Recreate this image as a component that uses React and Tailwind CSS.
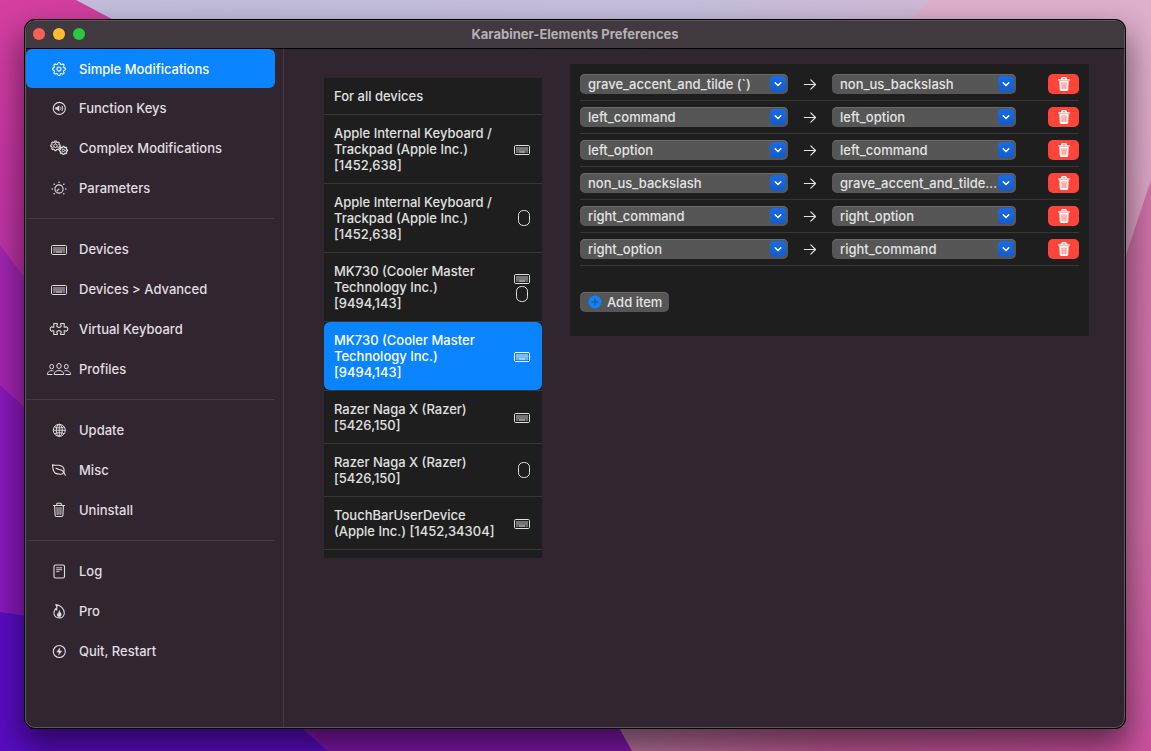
import React from "react";

const KeyboardIcon = () => (
  <svg width="16" height="12" viewBox="0 0 16 12" fill="none" aria-hidden="true">
    <rect x="0.5" y="2.5" width="15" height="9" rx="1.2" stroke="currentColor" />
    <path d="M2 4h12v4H2Z" fill="currentColor" fillOpacity="0.45" />
    <path d="M2 8h2v2H2ZM12 8h2v2h-2Z" fill="currentColor" fillOpacity="0.4" />
    <path d="M4.500 8h7v2h-7Z" fill="currentColor" fillOpacity="0.6" />
  </svg>
);

const MouseIcon = () => (
  <svg width="12" height="16" viewBox="0 0 12 16" fill="none" aria-hidden="true">
    <rect x="0.5" y="0.5" width="11" height="15" rx="4.8" stroke="currentColor" />
  </svg>
);

const gearPath = (cx, cy, r, depth, teeth) => {
  const n = teeth * 12;
  const pts = [];
  for (let i = 0; i < n; i++) {
    const a = (i / n) * Math.PI * 2 - Math.PI / 2;
    const wave = Math.max(-1, Math.min(1, Math.cos(a * teeth) * 1.8));
    const rr = r + depth * wave;
    pts.push(`${(cx + rr * Math.cos(a)).toFixed(2)} ${(cy + rr * Math.sin(a)).toFixed(2)}`);
  }
  return `M${pts.join("L")}Z`;
};

const GearIcon = () => (
  <svg width="16" height="16" viewBox="0 0 16 16" fill="none" stroke="currentColor" aria-hidden="true">
    <path d={gearPath(8, 8, 5.8, 0.7, 8)} strokeWidth="1.1" strokeLinejoin="round" />
    <circle cx="8" cy="8" r="2" strokeWidth="1.1" />
  </svg>
);

const SpeakerIcon = () => (
  <svg width="16" height="16" viewBox="0 0 16 16" fill="none" stroke="currentColor" aria-hidden="true">
    <circle cx="8.3" cy="8.4" r="6" strokeWidth="1.1" />
    <path d="M4.300 7.200h1.400L8.300 5.300v6.200L5.700 9.600H4.300Z" fill="currentColor" stroke="none" />
    <path d="M9.500 6.900c.6.900.6 2.100 0 3M10.900 5.900c1.100 1.500 1.100 3.500 0 5" strokeWidth="1" />
  </svg>
);

const GearsIcon = () => (
  <svg width="20" height="16" viewBox="0 0 20 16" fill="none" stroke="currentColor" aria-hidden="true">
    <path d={gearPath(6.5, 5.8, 4.3, 0.5, 8)} strokeWidth="1.1" />
    <circle cx="6.5" cy="5.8" r="1.7" strokeWidth="1" />
    <path d="M6.500 4v-2M5 6.700l-1.600 1M8 6.700l1.600 1" strokeWidth="0.700" />
    <path d={gearPath(14.5, 10.4, 3.6, 0.5, 8)} strokeWidth="1.1" />
    <circle cx="14.5" cy="10.4" r="1.1" strokeWidth="1" />
    <path d="M13.800 9.500l-1-1.300M15.600 10.400h1.800M13.800 11.300l-1 1.300" strokeWidth="0.700" />
  </svg>
);

const DialIcon = () => (
  <svg width="16" height="16" viewBox="0 0 16 16" fill="none" stroke="currentColor" aria-hidden="true">
    <circle cx="8" cy="9" r="4.100" strokeWidth="1.1" />
    <path d="M7.600 9.400l-2 2" strokeWidth="1.100" />
    <circle cx="7.9" cy="9.100" r="0.7" fill="currentColor" stroke="none" />
    <g fill="currentColor" stroke="none">
      <circle cx="8" cy="2.200" r="0.8" />
      <circle cx="3.2" cy="4.200" r="0.8" />
      <circle cx="12.8" cy="4.200" r="0.8" />
      <circle cx="1.2" cy="9" r="0.8" />
      <circle cx="14.8" cy="9" r="0.8" />
      <circle cx="3.2" cy="13.800" r="0.8" />
      <circle cx="12.8" cy="13.800" r="0.8" />
    </g>
  </svg>
);

const PuzzleIcon = () => (
  <svg width="20" height="14" viewBox="0 0 20 14" fill="none" stroke="currentColor" aria-hidden="true">
    <path
      d="M4.800 1.500h3.500v1.300c-.8.500-.6 1.800.3 2.200.8.400 2 .4 2.800 0 .9-.4 1.100-1.700.3-2.200V1.500h3.500v3.800h1c.8-.8 2.600-.5 2.600 1.700s-1.800 2.500-2.600 1.700h-1v3.800h-3.500v-1.300c.8-.5.6-1.800-.3-2.200-.8-.4-2-.4-2.800 0-.9.400-1.100 1.700-.3 2.200v1.300H4.800V8.700h-1C3 9.500 1.200 9.200 1.200 7S3 4.500 3.800 5.300h1Z"
      strokeWidth="1.100"
      strokeLinejoin="round"
    />
  </svg>
);

const PeopleIcon = () => (
  <svg width="26" height="14" viewBox="0 0 26 14" fill="none" stroke="currentColor" aria-hidden="true">
    <ellipse cx="13" cy="4" rx="2.200" ry="2.500" />
    <path d="M8.200 12.500c-.3-2.300 2-4 4.800-4s5.100 1.700 4.800 4Z" strokeLinejoin="round" />
    <ellipse cx="5.700" cy="4.600" rx="1.900" ry="2.200" />
    <path d="M7.500 8.900C4.500 7.900 1.300 9.700 1.400 12.500h5" strokeLinejoin="round" />
    <ellipse cx="20.300" cy="4.600" rx="1.900" ry="2.200" />
    <path d="M18.500 8.900c3-1 6.200.8 6.100 3.600h-5" strokeLinejoin="round" />
  </svg>
);

const GlobeIcon = () => (
  <svg width="16" height="16" viewBox="0 0 16 16" fill="none" stroke="currentColor" aria-hidden="true">
    <circle cx="8.300" cy="8.300" r="6" />
    <ellipse cx="8.300" cy="8.300" rx="3" ry="6" />
    <path d="M8.300 2.300v12M2.300 8.300h12M3.600 4.900c2.600 1.400 6.800 1.400 9.400 0M3.600 11.700c2.600-1.400 6.800-1.400 9.400 0" strokeWidth="0.900" />
  </svg>
);

const LeafIcon = () => (
  <svg width="16" height="16" viewBox="0 0 16 16" fill="none" stroke="currentColor" strokeWidth="1.100" strokeLinecap="round" strokeLinejoin="round" aria-hidden="true">
    <path d="M1.500 2.700c1.500 1 3.500.4 6.200.5 3.400.2 5.600 2.300 5.400 5.300-.1 2.200-1.300 3.800-3.700 3.800C5.500 12.300 2.300 10.300 2 6.600c-.1-1.300-.7-2.700-.5-3.900Z" />
    <path d="M5 6.300c2 1.300 4.200 1 6.200 2.200 1.600 1.100 2.300 2.800 3.100 4.700" />
  </svg>
);

const TrashIcon = () => (
  <svg width="14" height="16" viewBox="0 0 14 16" fill="none" stroke="currentColor" strokeWidth="1.100" strokeLinecap="round" strokeLinejoin="round" aria-hidden="true">
    <path d="M1.500 3.500h11M4.800 3.300V2.100c0-.5.300-.8.800-.8h2.800c.5 0 .8.300.8.800v1.200M2.600 3.700l.5 9.500c.1.800.5 1.300 1.300 1.300h5.200c.8 0 1.200-.5 1.300-1.300l.5-9.500" />
    <path d="M5 5.500l.2 7M7 5.500v7M9 5.500l-.2 7" strokeWidth="0.900" />
  </svg>
);

const TrashFillIcon = () => (
  <svg width="14" height="16" viewBox="0 0 14 16" fill="none" aria-hidden="true">
    <path d="M1.700 3.900h10.600M4.800 3.600V2.500c0-.5.300-.8.800-.8h2.800c.5 0 .8.300.8.800v1.100" stroke="currentColor" strokeWidth="1.400" strokeLinecap="round" />
    <path d="M2.300 4.800h9.400l-.5 8.600c-.1.900-.6 1.500-1.500 1.500H4.300c-.9 0-1.400-.6-1.500-1.500Z" fill="currentColor" />
    <path d="M5 6.400l.2 6.600M7 6.400v6.600M9 6.400l-.2 6.600" stroke="#ff4439" strokeWidth="0.800" />
  </svg>
);

const LogIcon = () => (
  <svg width="14" height="16" viewBox="0 0 14 16" fill="none" stroke="currentColor" aria-hidden="true">
    <rect x="2" y="2" width="10.500" height="13" rx="1.500" strokeWidth="1.100" />
    <path d="M4.200 4.800h6M4.200 6.700h6M4.200 8.600h3.200" strokeWidth="0.900" />
  </svg>
);

const FlameIcon = () => (
  <svg width="14" height="16" viewBox="0 0 14 16" fill="none" stroke="currentColor" strokeWidth="1.100" strokeLinejoin="round" aria-hidden="true">
    <path d="M3.800 1.600c4.600.6 8.500 4 8.500 8.300 0 3-2.200 5-5 5-3.200 0-5.400-2-5.400-4.800 0-1.900.8-3 1.600-4.400.3.700.6 1 1.200 1.300.5-2.200.4-3.900-.9-5.400Z" />
    <path d="M7.600 6.800c-.1 1.200.3 1.700 1 2.600.8 1 1 1.700.9 2.500-.2 1.300-1.100 2-2.300 2-1.300 0-2.200-.8-2.200-2 0-.8.300-1.300.7-1.900.2.300.4.500.8.600-.2-1.600.1-2.900 1.100-3.800Z" fill="currentColor" stroke="none" />
  </svg>
);

const BoltIcon = () => (
  <svg width="16" height="16" viewBox="0 0 16 16" fill="none" stroke="currentColor" aria-hidden="true">
    <circle cx="8.300" cy="8.500" r="6" strokeWidth="1.100" />
    <path d="M9.300 4.300l-4 4.900h2.600l-.6 3.500 4-4.900H8.700Z" fill="currentColor" stroke="none" />
  </svg>
);

const ArrowIcon = () => (
  <svg width="14" height="14" viewBox="0 0 14 14" fill="none" stroke="currentColor" strokeWidth="1.200" strokeLinecap="round" strokeLinejoin="round" aria-hidden="true">
    <path d="M1.300 7.500h11.200M7.800 2.800l4.700 4.700-4.700 4.700" />
  </svg>
);

const navGroups = [
  [
    ["Simple Modifications", GearIcon],
    ["Function Keys", SpeakerIcon],
    ["Complex Modifications", GearsIcon],
    ["Parameters", DialIcon],
  ],
  [
    ["Devices", KeyboardIcon],
    ["Devices > Advanced", KeyboardIcon],
    ["Virtual Keyboard", PuzzleIcon],
    ["Profiles", PeopleIcon],
  ],
  [
    ["Update", GlobeIcon],
    ["Misc", LeafIcon],
    ["Uninstall", TrashIcon],
  ],
  [
    ["Log", LogIcon],
    ["Pro", FlameIcon],
    ["Quit, Restart", BoltIcon],
  ],
];

const devices = [
  { name: "For all devices", icons: [] },
  { name: "Apple Internal Keyboard / Trackpad (Apple Inc.) [1452,638]", icons: ["keyboard"] },
  { name: "Apple Internal Keyboard / Trackpad (Apple Inc.) [1452,638]", icons: ["mouse"] },
  { name: "MK730 (Cooler Master Technology Inc.) [9494,143]", icons: ["keyboard", "mouse"] },
  { name: "MK730 (Cooler Master Technology Inc.) [9494,143]", icons: ["keyboard"], selected: true },
  { name: "Razer Naga X (Razer) [5426,150]", icons: ["keyboard"] },
  { name: "Razer Naga X (Razer) [5426,150]", icons: ["mouse"] },
  { name: "TouchBarUserDevice (Apple Inc.) [1452,34304]", icons: ["keyboard"] },
];

const mappings = [
  ["grave_accent_and_tilde (`)", "non_us_backslash"],
  ["left_command", "left_option"],
  ["left_option", "left_command"],
  ["non_us_backslash", "grave_accent_and_tilde (`)"],
  ["right_command", "right_option"],
  ["right_option", "right_command"],
];

const keyNames = mappings.map(([from]) => from);

function Wallpaper() {
  return (
    <svg className="absolute inset-0 size-full" viewBox="0 0 1151 751" preserveAspectRatio="none" aria-hidden="true">
      <defs>
        <linearGradient id="left" x1="0" y1="0" x2="0" y2="1">
          <stop offset="0" stopColor="#d63fa0" />
          <stop offset="0.3" stopColor="#c034a6" />
          <stop offset="1" stopColor="#a320b4" />
        </linearGradient>
        <linearGradient id="top" x1="0" y1="0" x2="1" y2="0">
          <stop offset="0" stopColor="#c3bedd" />
          <stop offset="0.55" stopColor="#c6c0de" />
          <stop offset="1" stopColor="#d9b4d2" />
        </linearGradient>
        <linearGradient id="right" x1="0" y1="0" x2="0" y2="1">
          <stop offset="0" stopColor="#dfb0cc" />
          <stop offset="0.3" stopColor="#dda4c6" />
          <stop offset="0.6" stopColor="#dc86b4" />
          <stop offset="1" stopColor="#c8509c" />
        </linearGradient>
        <linearGradient id="lowerRight" x1="0" y1="0" x2="0" y2="1">
          <stop offset="0" stopColor="#cf72a8" />
          <stop offset="0.6" stopColor="#d070a8" />
          <stop offset="1" stopColor="#cb519f" />
        </linearGradient>
        <linearGradient id="bottom" gradientUnits="userSpaceOnUse" x1="610" y1="0" x2="1126" y2="0">
          <stop offset="0" stopColor="#b8789f" />
          <stop offset="0.4" stopColor="#c05a95" />
          <stop offset="1" stopColor="#cb519f" />
        </linearGradient>
      </defs>
      <rect width="1151" height="751" fill="url(#left)" />
      <path d="M76 0H1151V400H600L112 19Z" fill="url(#top)" />
      <path d="M929 0H1151V751H800V144Z" fill="url(#right)" />
      <path d="M1151 180L1100 333V751H1151Z" fill="url(#lowerRight)" />
      <path d="M0 245L200 510V751H0Z" fill="#a426b2" />
      <path d="M0 385L400 751H0Z" fill="#8a18bd" />
      <path d="M0 612L200 640L328 751H0Z" fill="#5a0cc4" />
      <path d="M290 705H700V751H328Z" fill="#8317ae" />
      <path d="M598 690H1126V751H632Z" fill="url(#bottom)" />
    </svg>
  );
}

function NavItem({ label, Icon, active }) {
  return (
    <a
      href="#"
      aria-current={active ? "page" : undefined}
      className={
        active
          ? "flex h-[39px] items-center rounded-md bg-[#0a84ff] pl-5 text-white"
          : "flex h-10 items-center pl-5 text-[#e0dee0]"
      }
    >
      <span className="flex w-[26px] shrink-0 justify-center">
        <Icon />
      </span>
      <span className="pl-[7px]">{label}</span>
    </a>
  );
}

function Device({ device }) {
  return (
    <li className="border-b border-[#363636]">
      <button
        type="button"
        aria-pressed={!!device.selected}
        className={
          device.selected
            ? "flex w-full items-center justify-between rounded-md bg-[#0a84ff] py-[10px] pr-3 pl-[10px] text-left text-white"
            : "flex w-full items-center justify-between py-[10px] pr-3 pl-[10px] text-left text-[#e0e0e0]"
        }
      >
        <span className="w-[164px]">{device.name}</span>
        <span className="flex flex-col items-center gap-0.5">
          {device.icons.map((icon) => (icon === "keyboard" ? <KeyboardIcon key={icon} /> : <MouseIcon key={icon} />))}
        </span>
      </button>
    </li>
  );
}

function KeySelect({ value, label }) {
  return (
    <span className="relative flex min-w-0">
      <select
        aria-label={label}
        defaultValue={value}
        className="h-5 w-full appearance-none truncate rounded-[5px] bg-[#565656] pr-[18px] pb-px pl-2 text-[#e4e4e4] shadow-[inset_0_1px_0_#6a6a6a] outline-none"
      >
        {keyNames.map((name) => (
          <option key={name}>{name}</option>
        ))}
      </select>
      <span className="pointer-events-none absolute top-[2px] right-[2px] flex size-4 items-center justify-center rounded bg-linear-to-b from-[#1a6be6] to-[#145bcb] text-white">
        <svg width="8" height="6" viewBox="0 0 8 6" fill="none" stroke="currentColor" strokeWidth="1.500" strokeLinecap="round" strokeLinejoin="round" aria-hidden="true">
          <path d="M1.200 1.700L4 4.500l2.800-2.800" />
        </svg>
      </span>
    </span>
  );
}

export default function App() {
  return (
    <div className="relative isolate flex min-h-screen overflow-hidden pt-5 pr-[26px] pb-[23px] pl-[25px] font-[Inter,sans-serif] text-[13px] leading-4 font-medium">
      <div className="absolute inset-0 -z-10">
        <Wallpaper />
      </div>
      <div className="flex flex-1 flex-col overflow-hidden rounded-[10px] border border-[#5d545c] bg-[#312630] shadow-[0_0_0_1px_#000,0_16px_32px_4px_rgba(0,0,0,0.5)]">
        <header className="relative flex h-7 items-center justify-center border-b border-black bg-[#403940] pb-0.5">
          <div className="absolute left-[7px] flex gap-2">
            <button type="button" aria-label="Close" className="size-3 rounded-full bg-[#ff5f57]" />
            <button type="button" aria-label="Minimize" className="size-3 rounded-full bg-[#febc2e]" />
            <button type="button" aria-label="Zoom" className="size-3 rounded-full bg-[#28c840]" />
          </div>
          <h1 className="font-bold text-[#b5b1b5]">Karabiner-Elements Preferences</h1>
        </header>

        <div className="flex flex-1">
          <nav className="w-[258px] shrink-0 border-r border-[#443b44] pr-2">
            {navGroups.map((group, index) => (
              <div key={index} className={index > 0 ? "mt-[10px] border-t border-[#443b44] pt-[10px]" : ""}>
                {group.map(([label, Icon]) => (
                  <NavItem key={label} label={label} Icon={Icon} active={label === "Simple Modifications"} />
                ))}
              </div>
            ))}
          </nav>

          <main className="flex flex-1 items-start gap-7 pt-[15px] pr-[35px] pl-10">
            <ul className="mt-[14px] w-[218px] shrink-0 bg-[#1e1e1e] pb-2">
              {devices.map((device, index) => (
                <Device key={index} device={device} />
              ))}
            </ul>

            <section className="min-w-0 flex-1 bg-[#1e1e1e] px-[10px] pt-1 pb-6">
              {mappings.map(([from, to]) => (
                <div
                  key={from}
                  className="grid grid-cols-[208fr_44px_184fr_63px] items-center border-b border-[#363636] py-[6px]"
                >
                  <KeySelect value={from} label="From key" />
                  <span className="flex justify-center text-[#e0e0e0]">
                    <ArrowIcon />
                  </span>
                  <KeySelect value={to} label="To key" />
                  <button
                    type="button"
                    aria-label={`Remove ${from}`}
                    className="flex h-5 w-[31px] items-center justify-center justify-self-end rounded-[5px] bg-[#ff4439] text-white"
                  >
                    <TrashFillIcon />
                  </button>
                </div>
              ))}
              <button
                type="button"
                className="mt-[26px] flex h-5 items-center gap-[5px] rounded-[5px] bg-[#565656] pr-[7px] pb-px pl-2 text-[#e4e4e4] shadow-[inset_0_1px_0_#6a6a6a]"
              >
                <svg width="14" height="14" viewBox="0 0 14 14" aria-hidden="true">
                  <circle cx="7" cy="7" r="6.500" fill="#0a84ff" />
                  <path d="M7 4v6M4 7h6" stroke="#3f4c5c" strokeWidth="1.100" strokeLinecap="round" />
                </svg>
                Add item
              </button>
            </section>
          </main>
        </div>
      </div>
    </div>
  );
}
